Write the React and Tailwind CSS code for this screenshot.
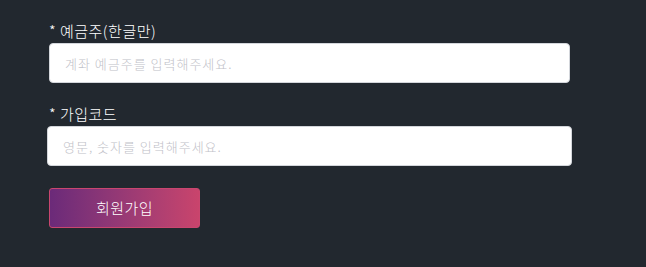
export default function App() {
  const font = { fontFamily: '"Noto Sans CJK KR", "Noto Sans", sans-serif' }

  return (
    <div className="w-[646px] h-[267px] bg-[#22282f] pl-[49px] pt-[21px]" style={font}>
      {/* 예금주 */}
      <div className="w-[521px]">
        <label className="block text-[15px] leading-[20px] tracking-[0.5px] font-light text-white">* 예금주(한글만)</label>
        <input
          type="text"
          placeholder="계좌 예금주를 입력해주세요."
          className="mt-[2px] block w-full h-[40px] px-[15px] rounded-[4px] bg-white border border-[#d3d6db] text-[13px] tracking-[1px] font-light text-gray-800 placeholder:text-[#bfc1c8] outline-none"
        />
      </div>

      {/* 가입코드 */}
      <div className="w-[525px] -ml-[2px] mt-[21px]">
        <label className="block pl-[2px] text-[15px] leading-[20px] tracking-[0.5px] font-light text-white">* 가입코드</label>
        <input
          type="text"
          placeholder="영문, 숫자를 입력해주세요."
          className="mt-[2px] block w-full h-[40px] px-[15px] rounded-[4px] bg-white border border-[#d3d6db] text-[13px] tracking-[1px] font-light text-gray-800 placeholder:text-[#bfc1c8] outline-none"
        />
      </div>

      <button className="mt-[22px] w-[151px] h-[40px] rounded-[3px] border border-[#c9466f] bg-gradient-to-r from-[#6b2a79] to-[#c9446c] text-white text-[15px] font-light tracking-[0.5px]">
        회원가입
      </button>
    </div>
  )
}
